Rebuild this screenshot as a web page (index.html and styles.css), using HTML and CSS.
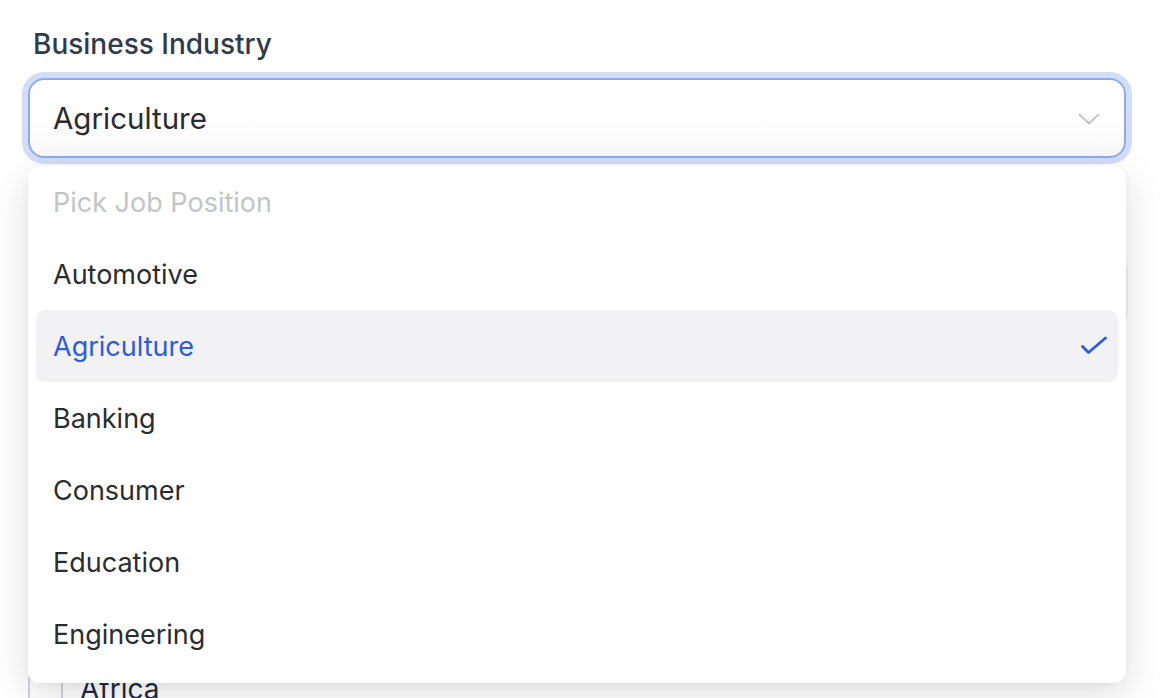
FILE: index.html
```html
<!DOCTYPE html>
<html lang="en">
<head>
<meta charset="utf-8">
<title>Business Industry</title>
<link rel="stylesheet" href="styles.css">
</head>
<body>
<div class="page">
  <div class="field">
    <label class="label">Business Industry</label>
    <div class="select-wrap">
      <div class="select">
        <span class="select-value">Agriculture</span>
        <svg class="chevron" width="22" height="12" viewBox="0 0 22 12" fill="none"><path d="M1.5 1.5 L11 10.5 L20.5 1.5" stroke="#c2c2c2" stroke-width="1.8" stroke-linecap="round" stroke-linejoin="round"/></svg>
      </div>
      <div class="dropdown">
        <div class="option placeholder">Pick Job Position</div>
        <div class="option">Automotive</div>
        <div class="option selected">Agriculture
          <svg class="check" width="28" height="20" viewBox="0 0 28 20" fill="none"><path d="M2.5 10.5 L8.5 16.5 L25.5 2" stroke="#2c5ae6" stroke-width="2.8" stroke-linecap="round" stroke-linejoin="round"/></svg>
        </div>
        <div class="option">Banking</div>
        <div class="option">Consumer</div>
        <div class="option">Education</div>
        <div class="option">Engineering</div>
      </div>
    </div>
  </div>
  <div class="ghost-input"></div>
  <div class="regions">
    <label class="check-row"><span class="box"></span><span class="check-text">Africa</span></label>
  </div>
</div>
</body>
</html>
```

FILE: styles.css
```css
* { box-sizing: border-box; }
html, body { margin: 0; padding: 0; background: #ffffff; }
body {
  font-family: "Inter", "Noto Sans", "Liberation Sans", sans-serif;
  width: 1162px;
  height: 698px;
  overflow: hidden;
}
.page {
  padding: 24px 36px 0 28px;
}
.field {
  display: flex;
  flex-direction: column;
}
.label {
  font-size: 28px;
  font-weight: 500;
  line-height: 40px;
  color: #2f3a4d;
  padding-left: 5px;
  margin-bottom: 14px;
}
.select-wrap {
  position: relative;
}
.select {
  height: 80px;
  border: 2px solid #89aaf6;
  border-radius: 16px;
  box-shadow: 0 0 0 6px #d2ddf8;
  background: linear-gradient(#ffffff 40%, #f9f9f9);
  display: flex;
  align-items: center;
  justify-content: space-between;
  padding: 0 24px 0 23px;
}
.select-value {
  font-size: 29.5px;
  color: #2a2b2f;
}
.chevron { display: block; margin-top: 2px; }
.dropdown {
  position: absolute;
  left: 0;
  right: 0;
  top: 88px;
  z-index: 5;
  background: #ffffff;
  border-radius: 12px;
  padding: 1px 8px 13px;
  box-shadow: 0 12px 40px rgba(0, 0, 0, 0.13), 0 2px 8px rgba(0, 0, 0, 0.04);
  display: flex;
  flex-direction: column;
}
.option {
  height: 72px;
  display: flex;
  align-items: center;
  justify-content: space-between;
  padding: 0 10px 0 17px;
  font-size: 27px;
  color: #2b2c30;
  border-radius: 9px;
}
.option.placeholder { color: #c4c4c6; height: 71px; }
.option.selected {
  background: #f2f2f5;
  color: #2c5ae6;
}
.check { display: block; }
.ghost-input {
  margin-top: 98px;
  height: 70px;
  border: 2px solid #f0f1f3;
  border-radius: 14px;
  margin-right: -2px;
}
.regions {
  margin-top: 346px;
}
.check-row {
  display: flex;
  align-items: flex-start;
  gap: 17px;
}
.box {
  width: 35px;
  height: 35px;
  border: 2px solid #d3d5da;
  border-radius: 8px;
  background: #fff;
  flex: none;
}
.check-text {
  font-size: 28px;
  line-height: 34px;
  color: #1f2a44;
  margin-top: 0;
}
```
